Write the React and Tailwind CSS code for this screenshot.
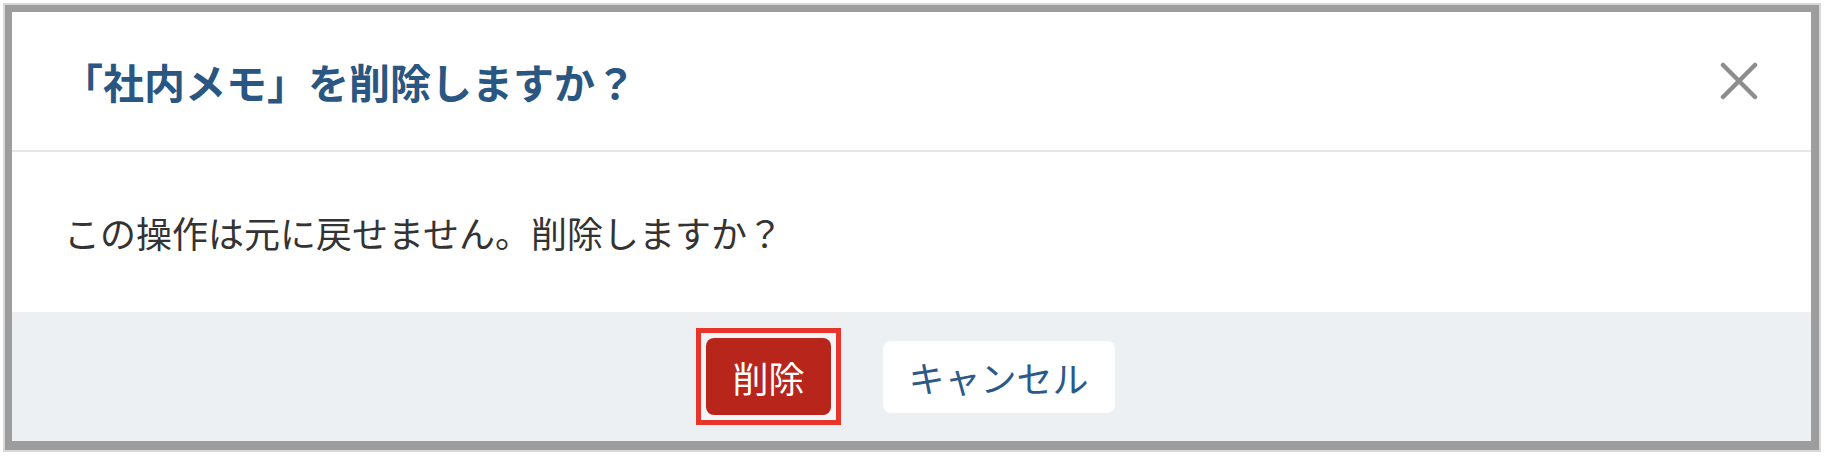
export default function App() {
  return (
    <div
      className="w-[1826px] h-[458px] bg-white pt-[3px] pl-[3px]"
      style={{ fontFamily: '"Noto Sans CJK JP", "Noto Sans", sans-serif' }}
    >
      <div className="w-[1818px] h-[449px] border-2 border-[#d8d8d8] bg-[#9d9d9d] pt-[7px] pl-[7px]">
        <div className="w-[1799px] h-[429px] flex flex-col bg-white">
          <div className="h-[140px] shrink-0 border-b-2 border-[#e6e6e6] flex items-center justify-between pl-[50px] pr-[53px]">
            <h2 className="text-[41px] leading-none font-bold text-[#2a5781]">
              「社内メモ」を削除しますか？
            </h2>
            <button className="w-[38px] h-[38px] flex items-center justify-center" aria-label="閉じる">
              <svg width="38" height="38" viewBox="0 0 38 38">
                <path d="M3 3 L35 35 M35 3 L3 35" stroke="#8d8d8d" strokeWidth="4.5" strokeLinecap="round" fill="none" />
              </svg>
            </button>
          </div>
          <div className="h-[160px] shrink-0 flex items-center pl-[52px]">
            <p className="text-[36px] leading-none text-[#333333]">
              この操作は元に戻せません。削除しますか？
            </p>
          </div>
          <div className="flex-1 bg-[#edf0f3] flex items-center justify-center gap-[42px] pr-[12px]">
            <div className="border-[5px] border-[#e8352b] p-[5px] bg-[#f3f5f7]">
              <button className="h-[77px] px-[26px] rounded-[8px] bg-[#b8261b] text-white text-[36px] leading-none flex items-center">
                削除
              </button>
            </div>
            <button className="h-[72px] px-[26px] rounded-[8px] bg-white text-[#2b5a8a] text-[36px] leading-none">
              キャンセル
            </button>
          </div>
        </div>
      </div>
    </div>
  );
}
